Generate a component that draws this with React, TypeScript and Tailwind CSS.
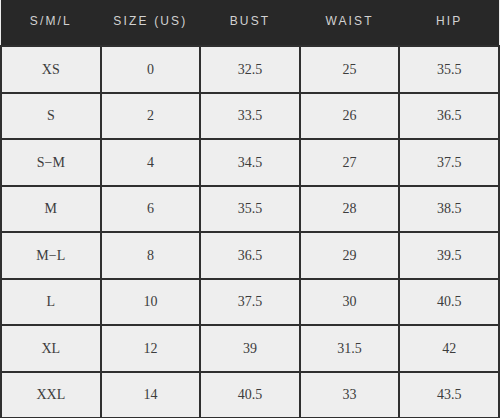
const headers = ['S/M/L', 'SIZE (US)', 'BUST', 'WAIST', 'HIP']

const rows = [
  ['XS', '0', '32.5', '25', '35.5'],
  ['S', '2', '33.5', '26', '36.5'],
  ['S-M', '4', '34.5', '27', '37.5'],
  ['M', '6', '35.5', '28', '38.5'],
  ['M-L', '8', '36.5', '29', '39.5'],
  ['L', '10', '37.5', '30', '40.5'],
  ['XL', '12', '39', '31.5', '42'],
  ['XXL', '14', '40.5', '33', '43.5']
]

export default function App() {
  return (
    <div className="w-[500px] h-[418px] overflow-hidden bg-[#eeeeee]">
      <table className="w-[500px] table-fixed border-collapse">
        <thead>
          <tr className="h-[46px] bg-[#282828]">
            {headers.map((h) => (
              <th
                key={h}
                className="pb-[3px] text-center text-[12px] font-normal tracking-[0.18em] text-[#d2d2d2] font-['Liberation_Sans',Arial,sans-serif]"
              >
                {h}
              </th>
            ))}
          </tr>
        </thead>
        <tbody>
          {rows.map((row) => (
            <tr key={row[0]} className="h-[46.5px]">
              {row.map((cell, i) => (
                <td
                  key={i}
                  className="border-2 border-[#2f2f2f] bg-[#eeeeee] text-center text-[14px] text-[#3c3c3c] font-['Liberation_Serif','Times_New_Roman',serif]"
                >
                  {cell.replace('-', '\u2212')}
                </td>
              ))}
            </tr>
          ))}
        </tbody>
      </table>
    </div>
  )
}
